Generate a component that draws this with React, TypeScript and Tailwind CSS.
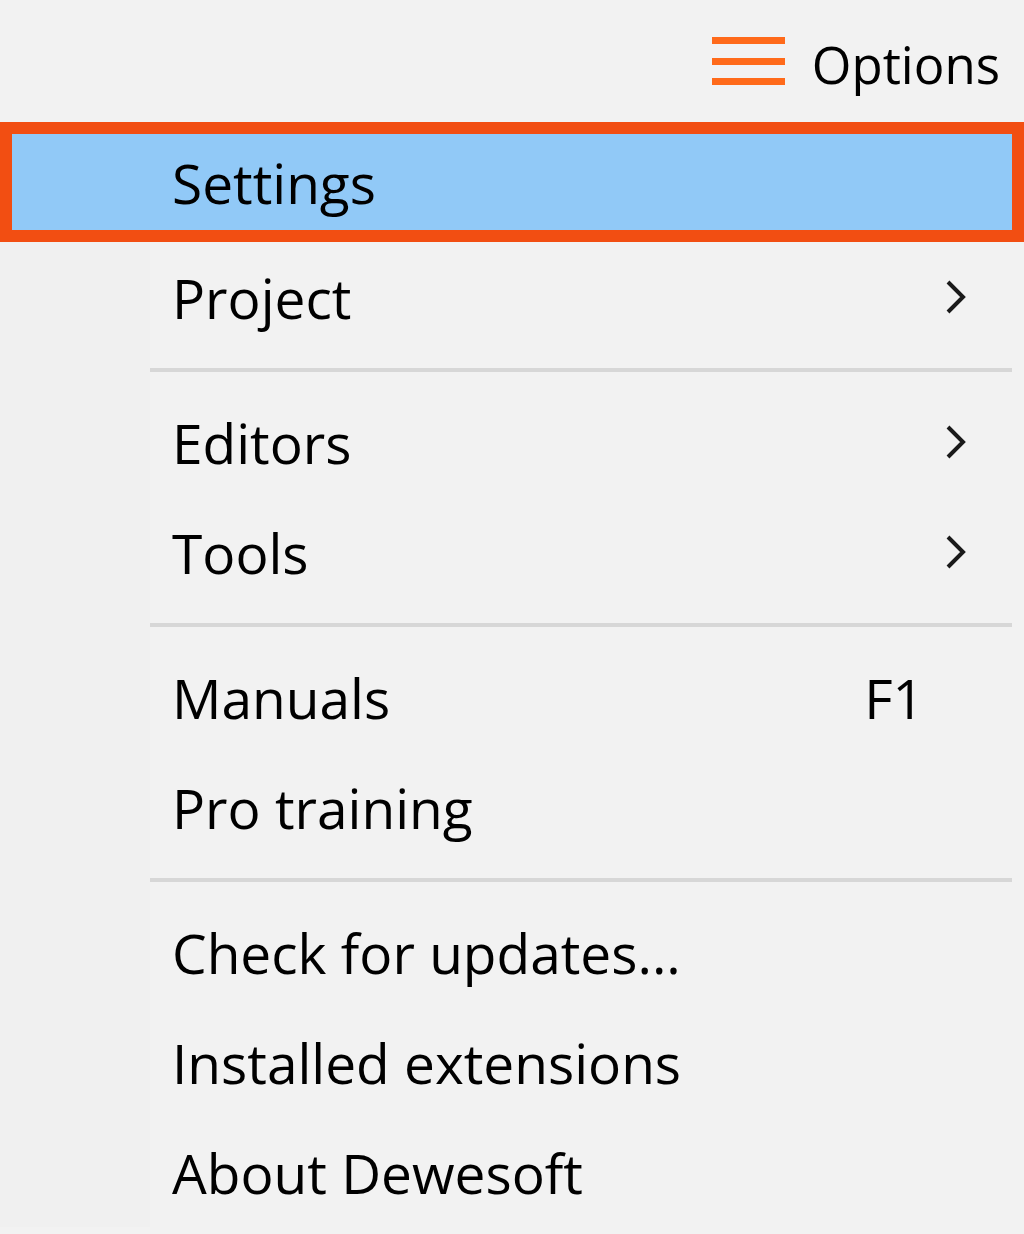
import React from "react";

type Item = { label: string; arrow?: boolean; shortcut?: string };

const groups: Item[][] = [
  [{ label: "Project", arrow: true }],
  [
    { label: "Editors", arrow: true },
    { label: "Tools", arrow: true },
  ],
  [{ label: "Manuals", shortcut: "F1" }, { label: "Pro training" }],
  [
    { label: "Check for updates..." },
    { label: "Installed extensions" },
    { label: "About Dewesoft" },
  ],
];

const Chevron = () => (
  <svg width="24" height="36" viewBox="0 0 24 36" className="text-[#1a1a1a]">
    <path d="M4 3 L19 18 L4 33" fill="none" stroke="currentColor" strokeWidth="4" />
  </svg>
);

const MenuRow: React.FC<{ item: Item }> = ({ item }) => (
  <div className="flex h-[110px] items-center">
    <div className="w-[150px] h-full shrink-0 bg-[#f0f0f0]" />
    <div className="flex flex-1 h-full items-center pl-[22px] pr-[56px]">
      <span className="flex-1">{item.label}</span>
      {item.arrow && <Chevron />}
      {item.shortcut && <span className="mr-[44px]">{item.shortcut}</span>}
    </div>
  </div>
);

const Separator = () => (
  <div className="flex h-[35px]">
    <div className="w-[150px] shrink-0 bg-[#f0f0f0]" />
    <div className="flex flex-1 items-center pr-[12px]">
      <div className="h-[4px] w-full bg-[#d7d7d7]" />
    </div>
  </div>
);

export default function App() {
  return (
    <div
      className="w-[1024px] h-[1234px] overflow-hidden bg-[#f2f2f2] text-black text-[55px] leading-none"
      style={{ fontFamily: '"Open Sans", "Noto Sans", "Liberation Sans", sans-serif' }}
    >
      <div className="flex h-[122px] items-center justify-end pr-[24px] pt-[6px] text-[51px]">
        <svg width="73" height="52" viewBox="0 0 73 52" className="mr-[27px] mb-[4px]">
          <rect x="0" y="1" width="73" height="7" fill="#ff6a1a" />
          <rect x="0" y="22" width="73" height="7" fill="#ff6a1a" />
          <rect x="0" y="42" width="73" height="7" fill="#ff6a1a" />
        </svg>
        <span>Options</span>
      </div>
      <div className="h-[120px] border-[12px] border-[#f24e12] bg-[#91c9f7] flex items-center pl-[160px]">
        Settings
      </div>
      {groups.map((g, gi) => (
        <React.Fragment key={gi}>
          {gi > 0 && <Separator />}
          {g.map((it) => (
            <MenuRow key={it.label} item={it} />
          ))}
        </React.Fragment>
      ))}
    </div>
  );
}
